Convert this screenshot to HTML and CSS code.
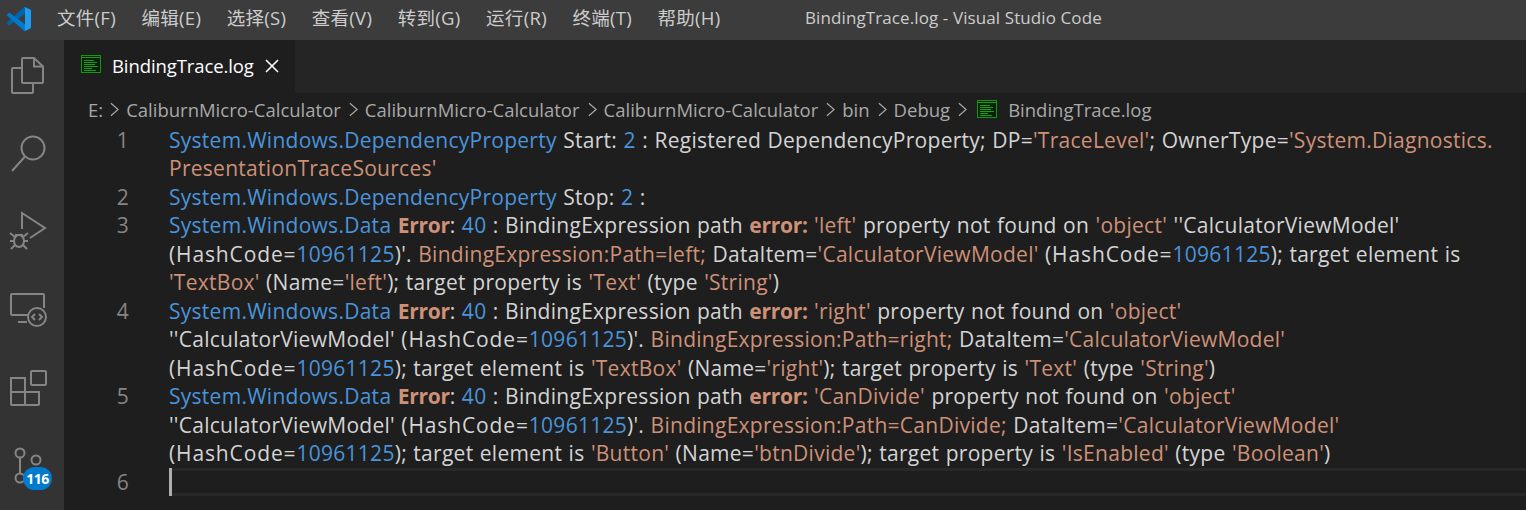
FILE: index.html
```html
<!DOCTYPE html>
<html lang="zh">
<head>
<meta charset="utf-8">
<title>BindingTrace.log - Visual Studio Code</title>
<link rel="stylesheet" href="styles.css">
</head>
<body>
<header class="titlebar">
  <svg class="logo" viewBox="0 0 100 100" width="24" height="24"><path fill="#0065a9" d="M96.460 10.800 75.860.880a6.230 6.230 0 0 0-7.100 1.200L1.300 63.600a4.160 4.160 0 0 0 0 6.160l5.500 5a4.160 4.160 0 0 0 5.320.24L93.400 14.300c2.730-2.070 6.600-.12 6.600 3.300v-.24a6.250 6.250 0 0 0-3.540-5.630Z"/><path fill="#007acc" d="M96.460 89.200 75.860 99.120a6.230 6.230 0 0 1-7.100-1.200L1.300 36.400a4.160 4.160 0 0 1 0-6.160l5.500-5a4.160 4.160 0 0 1 5.320-.24L93.400 85.700c2.730 2.070 6.600.12 6.600-3.300v.24a6.250 6.250 0 0 1-3.540 5.630Z"/><path fill="#1f9cf0" d="M75.860 99.130a6.230 6.230 0 0 1-7.100-1.200c2.300 2.300 6.240.67 6.240-2.580V4.650c0-3.250-3.940-4.880-6.240-2.580a6.230 6.230 0 0 1 7.100-1.200l20.600 9.900A6.250 6.250 0 0 1 100 16.400v67.200a6.250 6.250 0 0 1-3.540 5.630Z"/></svg>
  <nav class="menu">
    <span>文件(F)</span><span>编辑(E)</span><span>选择(S)</span><span>查看(V)</span><span>转到(G)</span><span>运行(R)</span><span>终端(T)</span><span>帮助(H)</span>
  </nav>
  <div class="wintitle">BindingTrace.log - Visual Studio Code</div>
</header>
<div class="main">
  <aside class="activity">
    <svg class="act" viewBox="0 0 36 36"><path d="M12 9V1a1 1 0 0 1 1-1h11l9 8.500V24a1 1 0 0 1-1 1H13a1 1 0 0 1-1-1z"/><path d="M24 0v8.500h9"/><path d="M12 10H3a1 1 0 0 0-1 1v23a1 1 0 0 0 1 1h19a1 1 0 0 0 1-1v-9"/></svg>
    <svg class="act" viewBox="0 0 36 36"><circle cx="23" cy="12" r="11.500"/><path d="M15 20.500 2 35"/></svg>
    <svg class="act" viewBox="0 0 36 36"><path d="M12 15V-1l23 15-15 10"/><ellipse cx="9" cy="27" rx="5" ry="6"/><path d="M0 19l5 4M18 19l-5 4M0 27h4M18 27h-4M1 35l4-4M17 35l-4-4M5 21h8"/></svg>
    <svg class="act" viewBox="0 0 36 36"><path d="M19 23H2a1 1 0 0 1-1-1V3a1 1 0 0 1 1-1h31a1 1 0 0 1 1 1v13"/><path d="M8 30h9"/><circle cx="27" cy="25" r="9"/><path d="M25 22l-3 3 3 3M29 22l3 3-3 3"/></svg>
    <svg class="act" viewBox="0 0 36 36"><path d="M1 8h14v27H2a1 1 0 0 1-1-1z"/><path d="M1 22h28v12a1 1 0 0 1-1 1H15"/><rect x="21" y="1" width="15" height="14" rx="1"/></svg>
    <div class="scm">
      <svg class="act" viewBox="0 0 36 36"><circle cx="10" cy="5" r="4.500"/><circle cx="10" cy="30" r="4.500"/><circle cx="26" cy="12" r="4.500"/><path d="M10 9.500v16"/></svg>
      <span class="badge">116</span>
    </div>
  </aside>
  <main class="editor">
    <div class="tabs">
      <div class="tab">
        <svg class="fileicon" viewBox="0 0 20 18"><rect x="0.500" y="0.500" width="19" height="17" fill="#0a1f0a" stroke="#0f9a0f"/><path stroke="#14a014" stroke-width="1" d="M1 2.500h18M3 5.500h10M3 7.500h13M3 9.500h11M3 11.500h14M3 13.500h8M3 15.500h12"/></svg>
        <span class="tabname">BindingTrace.log</span>
        <svg class="close" viewBox="0 0 14 14"><path d="M1 1l12 12M13 1 1 13"/></svg>
      </div>
    </div>
    <div class="crumbs">
      <span>E:</span><svg class="chev first" viewBox="0 0 10 16"><path d="M1 1l8 7-8 7"/></svg>
      <span>CaliburnMicro-Calculator</span><svg class="chev" viewBox="0 0 10 16"><path d="M1 1l8 7-8 7"/></svg>
      <span>CaliburnMicro-Calculator</span><svg class="chev" viewBox="0 0 10 16"><path d="M1 1l8 7-8 7"/></svg>
      <span>CaliburnMicro-Calculator</span><svg class="chev" viewBox="0 0 10 16"><path d="M1 1l8 7-8 7"/></svg>
      <span>bin</span><svg class="chev" viewBox="0 0 10 16"><path d="M1 1l8 7-8 7"/></svg>
      <span>Debug</span><svg class="chev" viewBox="0 0 10 16"><path d="M1 1l8 7-8 7"/></svg>
      <svg class="fileicon small" viewBox="0 0 20 18"><rect x="0.500" y="0.500" width="19" height="17" fill="#0a1f0a" stroke="#0f9a0f"/><path stroke="#14a014" stroke-width="1" d="M1 2.500h18M3 5.500h10M3 7.500h13M3 9.500h11M3 11.500h14M3 13.500h8M3 15.500h12"/></svg>
      <span class="crumbfile">BindingTrace.log</span>
    </div>
    <div class="code">
      <div class="row"><div class="ln">1</div><div class="src">
        <div><b>System.Windows.DependencyProperty</b> Start: <b>2</b> : Registered DependencyProperty; DP=<i>'TraceLevel'</i>; OwnerType=<i>'System.Diagnostics.</i></div>
        <div><i>PresentationTraceSources'</i></div>
      </div></div>
      <div class="row"><div class="ln">2</div><div class="src">
        <div><b>System.Windows.DependencyProperty</b> Stop: <b>2</b> :</div>
      </div></div>
      <div class="row"><div class="ln">3</div><div class="src">
        <div><b>System.Windows.Data</b> <em>Error</em>: <b>40</b> : BindingExpression path <em>error:</em> <i>'left'</i> property not found on <i>'object'</i> ''CalculatorViewModel'</div>
        <div><span class="hc">(HashCode=</span><b>10961125</b>)'. <i>BindingExpression:Path=left;</i> DataItem=<i>'CalculatorViewModel'</i> <span class="hc">(HashCode=</span><b>10961125</b>); target element is</div>
        <div><i>'TextBox'</i> (Name=<i>'left'</i>); target property is <i>'Text'</i> (type <i>'String'</i>)</div>
      </div></div>
      <div class="row"><div class="ln">4</div><div class="src">
        <div><b>System.Windows.Data</b> <em>Error</em>: <b>40</b> : BindingExpression path <em>error:</em> <i>'right'</i> property not found on <i>'object'</i></div>
        <div>''CalculatorViewModel' <span class="hc">(HashCode=</span><b>10961125</b>)'. <i>BindingExpression:Path=right;</i> DataItem=<i>'CalculatorViewModel'</i></div>
        <div><span class="hc">(HashCode=</span><b>10961125</b>); target element is <i>'TextBox'</i> (Name=<i>'right'</i>); target property is <i>'Text'</i> (type <i>'String'</i>)</div>
      </div></div>
      <div class="row"><div class="ln">5</div><div class="src">
        <div><b>System.Windows.Data</b> <em>Error</em>: <b>40</b> : BindingExpression path <em>error:</em> <i>'CanDivide'</i> property not found on <i>'object'</i></div>
        <div>''CalculatorViewModel' <span class="hc">(HashCode=</span><b>10961125</b>)'. <i>BindingExpression:Path=CanDivide;</i> DataItem=<i>'CalculatorViewModel'</i></div>
        <div><span class="hc">(HashCode=</span><b>10961125</b>); target element is <i>'Button'</i> (Name=<i>'btnDivide'</i>); target property is <i>'IsEnabled'</i> (type <i>'Boolean'</i>)</div>
      </div></div>
      <div class="row"><div class="ln">6</div><div class="src current"><span class="cursor"></span></div></div>
    </div>
  </main>
</div>
</body>
</html>
```
FILE: styles.css
```css
* { box-sizing: border-box; }
html, body { margin: 0; height: 100%; overflow: hidden; }
body {
  display: flex; flex-direction: column;
  width: 1526px; height: 510px;
  background: #1e1e1e;
  font-family: "Open Sans", "Noto Sans CJK SC", sans-serif;
  color: #d4d4d4;
}
.titlebar {
  height: 40px; flex: none; background: #3c3c3c; color: #cccccc;
  display: flex; align-items: center; padding-left: 7px;
  position: relative;
}
.logo { flex: none; margin-top: -3px; }
.menu { display: flex; gap: 25.500px; margin-left: 26px; padding-bottom: 6px; font-size: 18.500px; letter-spacing: 0.300px; }
.wintitle { position: absolute; left: 805px; top: 7px; font-size: 17px; letter-spacing: 0.100px; line-height: 22px; }
.main { flex: 1; display: flex; min-height: 0; }
.activity {
  width: 64px; flex: none; background: #333333;
  display: flex; flex-direction: column; align-items: center;
  padding-top: 18px; gap: 42px; padding-right: 8px;
}
.act { width: 36px; height: 36px; fill: none; stroke: #858585; stroke-width: 2; overflow: visible; display: block; }
.scm { position: relative; width: 36px; height: 36px; }
.badge {
  position: absolute; left: 13px; top: 19px;
  width: 29px; height: 23px; border-radius: 12px;
  background: #007acc; color: #fff; font-size: 14px; font-weight: 700; letter-spacing: -0.500px;
  display: flex; align-items: center; justify-content: center;
}
.editor { flex: 1; min-width: 0; display: flex; flex-direction: column; }
.tabs { height: 53px; flex: none; background: #252526; display: flex; }
.tab {
  width: 231px; background: #1e1e1e; color: #fff;
  display: flex; align-items: center; padding-left: 17px; padding-bottom: 2px;
  font-size: 18.500px; letter-spacing: -0.100px;
}
.fileicon { width: 20px; height: 18px; flex: none; margin-top: -4px; }
.tabname { margin-left: 11px; }
.close { width: 14px; height: 14px; margin-left: 11px; fill: none; stroke: #fff; stroke-width: 1.600; }
.crumbs {
  height: 34px; flex: none; display: flex; align-items: center;
  padding-left: 24px; padding-bottom: 2px; color: #a9a9a9;
  font-size: 18.500px; white-space: nowrap;
}
.chev { width: 9px; height: 15px; margin: 0 7px 0 8px; fill: none; stroke: #a9a9a9; stroke-width: 1.300; flex: none; }
.chev.first { margin-left: 7px; }
.fileicon.small { margin: 0 11px 0 3px; }
.code { margin-top: -1.100px; font-size: 21px; letter-spacing: 0.270px; word-spacing: 0.700px; line-height: 28.500px; white-space: nowrap; }
.row { display: flex; }
.ln { width: 105px; flex: none; padding-right: 40px; text-align: right; color: #858585; }
.src { flex: 1; min-width: 0; color: #d4d4d4; }
.src b { font-weight: 400; color: #4a94dc; }
.src i { font-style: normal; color: #ce9178; }
.src em { font-style: normal; font-weight: 700; color: #ce9178; letter-spacing: -0.300px; }
.hc { letter-spacing: 0.870px; }
.current { height: 28.500px; border-top: 3px solid #282828; border-bottom: 3px solid #282828; position: relative; }
.cursor { position: absolute; left: 0; top: -3px; width: 3px; height: 28.500px; background: #aeafad; }
```
